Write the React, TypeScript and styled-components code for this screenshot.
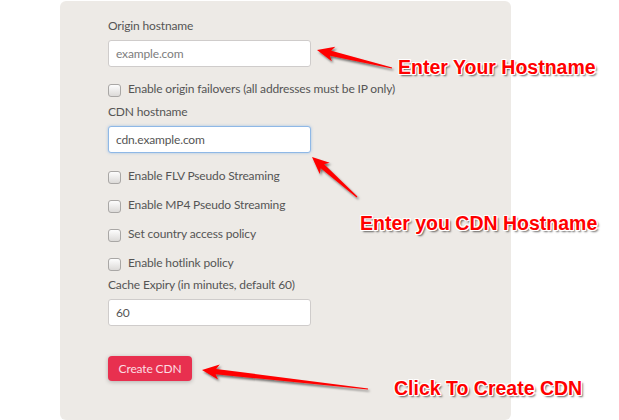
import React from 'react'
import styled, { createGlobalStyle } from 'styled-components'

const GlobalStyle = createGlobalStyle`
  html, body {
    margin: 0;
    padding: 0;
    background: #ffffff;
  }
  body {
    font-family: Lato, 'Open Sans', sans-serif;
  }
`

const Page = styled.div`
  position: relative;
  width: 619px;
  height: 420px;
  overflow: hidden;
  padding-left: 60px;
  box-sizing: border-box;
`

const Panel = styled.div`
  width: 451px;
  height: 419px;
  box-sizing: border-box;
  margin-top: 1px;
  padding: 16px 0 0 48px;
  background: #edeae6;
  border-radius: 6px;
  display: flex;
  flex-direction: column;
`

const Label = styled.div<{ $top?: number }>`
  font-size: 12px;
  letter-spacing: -0.15px;
  line-height: 18px;
  color: #555555;
  margin-top: ${p => p.$top ?? 0}px;
  margin-bottom: 5px;
`

const TextInput = styled.input<{ $focused?: boolean }>`
  width: 203px;
  height: 27px;
  box-sizing: border-box;
  padding: 0 7px;
  border-radius: 3px;
  border: 1px solid ${p => (p.$focused ? '#8fb8e6' : '#cfcccb')};
  box-shadow: ${p =>
    p.$focused ? '0 0 3px rgba(102, 160, 230, 0.55)' : 'none'};
  background: #ffffff;
  font-family: Lato, 'Open Sans', sans-serif;
  font-size: 12px;
  letter-spacing: -0.15px;
  color: #555555;
  outline: none;
  &::placeholder {
    color: #7d7d7d;
  }
`

const CheckList = styled.div<{ $top: number }>`
  display: flex;
  flex-direction: column;
  gap: 11px;
  margin-top: ${p => p.$top}px;
`

const CheckRow = styled.label`
  display: flex;
  align-items: center;
  height: 18px;
  gap: 7px;
  font-size: 12px;
  letter-spacing: -0.15px;
  color: #555555;
`

const Box = styled.span`
  width: 11px;
  height: 11px;
  margin-top: 5px;
  border: 1px solid #a9a7a5;
  border-radius: 3px;
  background: linear-gradient(#fdfdfd, #dcdad8);
`

const CreateButton = styled.button`
  margin-top: 30px;
  width: 84px;
  height: 25px;
  border: none;
  border-radius: 4px;
  background: #e8304f;
  color: #fbdde2;
  font-family: Lato, 'Open Sans', sans-serif;
  font-size: 12px;
  letter-spacing: -0.15px;
  box-shadow: 0 1px 4px rgba(0, 0, 0, 0.25);
  padding: 0;
`

const Note = styled.div<{ $x: number; $y: number }>`
  position: absolute;
  left: ${p => p.$x}px;
  top: ${p => p.$y}px;
  font-family: 'Liberation Sans', Arial, sans-serif;
  font-weight: 700;
  font-size: 19.5px;
  line-height: 22px;
  color: #ff0000;
  white-space: nowrap;
  text-shadow: -1px -1px 0 #fff, 1px -1px 0 #fff, -1px 1px 0 #fff,
    1px 1px 0 #fff, 0 -1px 0 #fff, 0 1px 0 #fff, -1px 0 0 #fff, 1px 0 0 #fff,
    2px 2px 2px rgba(0, 0, 0, 0.6);
`

const Overlay = styled.svg`
  position: absolute;
  left: 0;
  top: 0;
  pointer-events: none;
`

type Pt = [number, number]

const arrowPoints = (tail: Pt, tip: Pt) => {
  const dx = tip[0] - tail[0]
  const dy = tip[1] - tail[1]
  const len = Math.hypot(dx, dy)
  const ux = dx / len
  const uy = dy / len
  const nx = -uy
  const ny = ux
  const headLen = 17
  const headW = 7.5
  const neckW = 2.6
  const bx = tip[0] - ux * headLen
  const by = tip[1] - uy * headLen
  const nb = (w: number, x: number, y: number) =>
    `${x + nx * w},${y + ny * w}`
  return [
    nb(0.6, tail[0], tail[1]),
    nb(neckW, bx + ux * 3, by + uy * 3),
    nb(headW, bx, by),
    `${tip[0]},${tip[1]}`,
    nb(-headW, bx, by),
    nb(-neckW, bx + ux * 3, by + uy * 3),
    nb(-0.6, tail[0], tail[1]),
  ].join(' ')
}

const arrows: { tail: Pt; tip: Pt }[] = [
  { tail: [392, 68], tip: [317, 50] },
  { tail: [357, 197], tip: [312, 157] },
  { tail: [368, 389], tip: [202, 370] },
]

const checks = [
  'Enable FLV Pseudo Streaming',
  'Enable MP4 Pseudo Streaming',
  'Set country access policy',
  'Enable hotlink policy',
]

export default function App() {
  return (
    <>
      <GlobalStyle />
      <Page>
        <Panel>
          <Label>Origin hostname</Label>
          <TextInput type="text" placeholder="example.com" />
          <CheckList $top={12}>
            <CheckRow>
              <Box />
              Enable origin failovers (all addresses must be IP only)
            </CheckRow>
          </CheckList>
          <Label $top={6}>CDN hostname</Label>
          <TextInput type="text" defaultValue="cdn.example.com" $focused />
          <CheckList $top={13}>
            {checks.map(c => (
              <CheckRow key={c}>
                <Box />
                {c}
              </CheckRow>
            ))}
          </CheckList>
          <Label $top={5}>Cache Expiry (in minutes, default 60)</Label>
          <TextInput type="text" defaultValue="60" />
          <div>
            <CreateButton>Create CDN</CreateButton>
          </div>
        </Panel>

        <Overlay width={619} height={420}>
          <defs>
            <filter id="shade" x="-20%" y="-50%" width="140%" height="200%">
              <feDropShadow
                dx="1.5"
                dy="2"
                stdDeviation="1.2"
                floodColor="#000"
                floodOpacity="0.55"
              />
            </filter>
          </defs>
          {arrows.map((a, i) => (
            <polygon
              key={i}
              points={arrowPoints(a.tail, a.tip)}
              fill="#ff0000"
              filter="url(#shade)"
            />
          ))}
        </Overlay>

        <Note $x={398} $y={56}>Enter Your Hostname</Note>
        <Note $x={360} $y={212}>Enter you CDN Hostname</Note>
        <Note $x={394} $y={377}>Click To Create CDN</Note>
      </Page>
    </>
  )
}
